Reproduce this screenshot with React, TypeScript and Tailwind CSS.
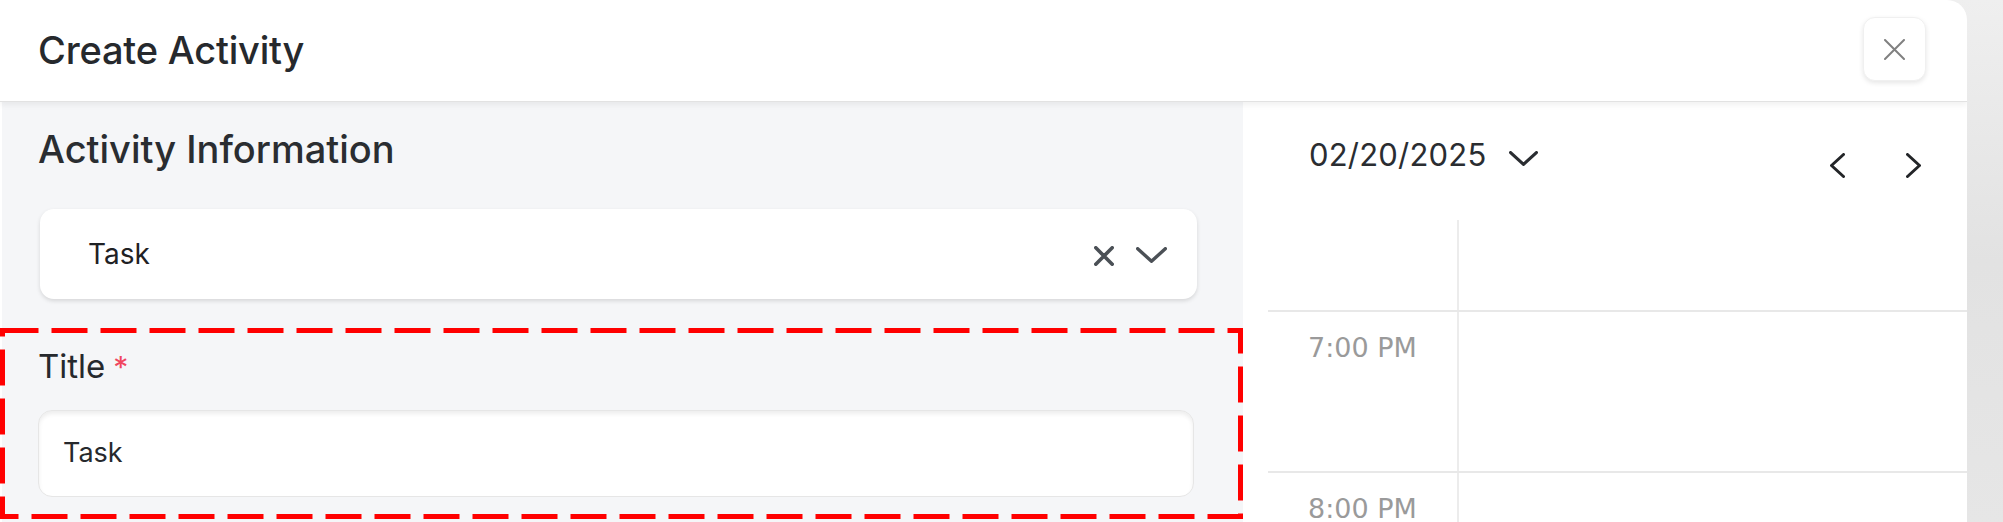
const sans = "font-['Inter','Liberation_Sans',sans-serif]";

function DashedFrame() {
  // red annotation frame drawn around the title field
  return (
    <svg className="pointer-events-none absolute inset-0 h-full w-full" preserveAspectRatio="none">
      <rect
        x="2.5"
        y="2.5"
        width="calc(100% - 5px)"
        height="calc(100% - 5px)"
        fill="none"
        stroke="#ff0000"
        strokeWidth="5"
        strokeDasharray="36 13"
      />
    </svg>
  );
}

function Cross({ size, stroke, className }: { size: number; stroke: number; className?: string }) {
  return (
    <svg width={size} height={size} viewBox={`0 0 ${size} ${size}`} className={className} fill="none">
      <path
        d={`M${stroke / 2} ${stroke / 2}L${size - stroke / 2} ${size - stroke / 2}M${size - stroke / 2} ${stroke / 2}L${stroke / 2} ${size - stroke / 2}`}
        stroke="currentColor"
        strokeWidth={stroke}
        strokeLinecap="round"
      />
    </svg>
  );
}

function Chevron({
  w,
  h,
  stroke,
  dir,
  className,
}: {
  w: number;
  h: number;
  stroke: number;
  dir: "down" | "left" | "right";
  className?: string;
}) {
  const s = stroke / 2;
  const d =
    dir === "down"
      ? `M${s} ${s}L${w / 2} ${h - s}L${w - s} ${s}`
      : dir === "left"
        ? `M${w - s} ${s}L${s} ${h / 2}L${w - s} ${h - s}`
        : `M${s} ${s}L${w - s} ${h / 2}L${s} ${h - s}`;
  return (
    <svg width={w} height={h} viewBox={`0 0 ${w} ${h}`} className={className} fill="none">
      <path d={d} stroke="currentColor" strokeWidth={stroke} strokeLinecap="round" strokeLinejoin="round" />
    </svg>
  );
}

function HourRow({ label }: { label: string }) {
  return (
    <div className="flex h-[161px] border-t-2 border-[#e8e8e8]">
      <div className="w-[191px] border-r-2 border-[#ececec] pl-[40px] pt-[16px]">
        <span className="font-['DejaVu_Sans',sans-serif] text-[27px] text-[#9a9a9a]">{label}</span>
      </div>
      <div className="flex-1" />
    </div>
  );
}

export default function App() {
  return (
    <div className={`flex h-[522px] w-[2003px] overflow-hidden bg-gradient-to-b from-[#efefef] via-[#e2e2e2] to-[#e6e6e6] ${sans}`}>
      <div className="flex h-full w-[1967px] flex-col overflow-hidden rounded-tr-[20px] bg-white">
        <header className="relative z-10 flex h-[102px] shrink-0 items-center justify-between border-b border-[#e2e2e2] pl-[38px] pr-[41px] shadow-[0_3px_6px_rgba(0,0,0,0.06)]">
          <h1 className="text-[38px] font-medium tracking-[-0.2px] text-[#26292d]">Create Activity</h1>
          <button
            type="button"
            className="mb-[3px] flex h-[64px] w-[63px] items-center justify-center rounded-[12px] border border-[#f0f0f0] bg-white text-[#808080] shadow-[0_2px_5px_rgba(0,0,0,0.1)]"
          >
            <Cross size={21} stroke={2} />
          </button>
        </header>

        <div className="flex flex-1 pl-[2px]">
          <section className="w-[1241px] bg-[#f5f6f8]">
            <h2 className="pl-[36px] pt-[24px] text-[38px] font-medium leading-[46px] text-[#2a2d31]">
              Activity Information
            </h2>
            <div className="ml-[38px] mt-[37px] flex h-[90px] w-[1157px] items-center justify-between rounded-[14px] bg-white pl-[48px] pr-[30px] shadow-[0_2px_4px_rgba(0,0,0,0.13)]">
              <span className="text-[28px] text-[#1f2124]">Task</span>
              <div className="flex items-center gap-[22px] text-[#4b5056]">
                <Cross size={20} stroke={3.6} className="mt-[3px]" />
                <Chevron dir="down" w={31} h={16} stroke={3.4} className="mt-[2px]" />
              </div>
            </div>

            <div className="relative -ml-[2px] mt-[29px] h-[191px] w-[1243px] pl-[38px] pt-[18px]">
              <DashedFrame />
              <div className="flex items-baseline gap-[8px] text-[33px] leading-[40px] text-[#26292d]">
                Title <span className="text-[30px] text-[#f0465f]">*</span>
              </div>
              <div className="mt-[23px] flex h-[87px] w-[1156px] items-center rounded-[14px] border border-[#e6e6e6] bg-white pl-[24px] shadow-[inset_0_3px_4px_rgba(0,0,0,0.07)]">
                <span className="text-[27px] text-[#26292d]">Task</span>
              </div>
            </div>
          </section>

          <section className="flex-1 bg-white">
            <div className="flex h-[118px] items-start justify-between pl-[66px] pr-[46px]">
              <div className="flex items-center gap-[23px] pt-[30px]">
                <span className="text-[31px] tracking-[0.2px] text-[#2a2d31]">02/20/2025</span>
                <Chevron dir="down" w={29} h={15} stroke={3.2} className="mt-[6px] text-[#2a2d31]" />
              </div>
              <div className="flex items-center gap-[61px] pt-[51px] text-[#232528]">
                <Chevron dir="left" w={15} h={25} stroke={3} />
                <Chevron dir="right" w={15} h={25} stroke={3} />
              </div>
            </div>
            <div className="ml-[25px]">
              <div className="flex h-[90px]">
                <div className="w-[191px] border-r-2 border-[#ececec]" />
              </div>
              <HourRow label="7:00 PM" />
              <HourRow label="8:00 PM" />
            </div>
          </section>
        </div>
      </div>
    </div>
  );
}
